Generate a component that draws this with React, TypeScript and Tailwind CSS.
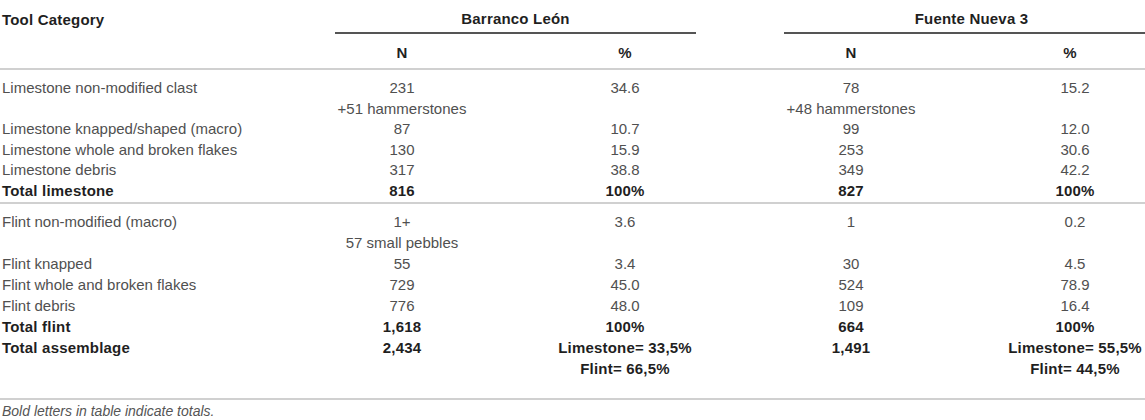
import React from "react";

type Row = {
  label: string;
  bl: string[];
  blPct: string[];
  fn: string[];
  fnPct: string[];
  bold?: boolean;
};

const limestone: Row[] = [
  { label: "Limestone non-modified clast", bl: ["231", "+51 hammerstones"], blPct: ["34.6"], fn: ["78", "+48 hammerstones"], fnPct: ["15.2"] },
  { label: "Limestone knapped/shaped (macro)", bl: ["87"], blPct: ["10.7"], fn: ["99"], fnPct: ["12.0"] },
  { label: "Limestone whole and broken flakes", bl: ["130"], blPct: ["15.9"], fn: ["253"], fnPct: ["30.6"] },
  { label: "Limestone debris", bl: ["317"], blPct: ["38.8"], fn: ["349"], fnPct: ["42.2"] },
  { label: "Total limestone", bl: ["816"], blPct: ["100%"], fn: ["827"], fnPct: ["100%"], bold: true },
];

const flint: Row[] = [
  { label: "Flint non-modified (macro)", bl: ["1+", "57 small pebbles"], blPct: ["3.6"], fn: ["1"], fnPct: ["0.2"] },
  { label: "Flint knapped", bl: ["55"], blPct: ["3.4"], fn: ["30"], fnPct: ["4.5"] },
  { label: "Flint whole and broken flakes", bl: ["729"], blPct: ["45.0"], fn: ["524"], fnPct: ["78.9"] },
  { label: "Flint debris", bl: ["776"], blPct: ["48.0"], fn: ["109"], fnPct: ["16.4"] },
  { label: "Total flint", bl: ["1,618"], blPct: ["100%"], fn: ["664"], fnPct: ["100%"], bold: true },
  { label: "Total assemblage", bl: ["2,434"], blPct: ["Limestone= 33,5%", "Flint= 66,5%"], fn: ["1,491"], fnPct: ["Limestone= 55,5%", "Flint= 44,5%"], bold: true },
];

const Lines = ({ items }: { items: string[] }) => (
  <>
    {items.map((t, i) => (
      <div key={i} className="whitespace-nowrap">
        {t}
      </div>
    ))}
  </>
);

const BodyRow = ({ row, leading }: { row: Row; leading: string }) => {
  const tone = row.bold
    ? "font-bold text-[#1f1f1f] tracking-[0.2px]"
    : "text-[#505050]";
  return (
    <tr className={`align-top ${leading} ${tone}`}>
      <td className="pl-[2px] whitespace-nowrap">{row.label}</td>
      <td className="text-center">
        <Lines items={row.bl} />
      </td>
      <td />
      <td className="text-center">
        <Lines items={row.blPct} />
      </td>
      <td />
      <td className="text-center">
        <Lines items={row.fn} />
      </td>
      <td />
      <td className="text-center">
        <Lines items={row.fnPct} />
      </td>
    </tr>
  );
};

export default function App() {
  return (
    <div
      className="w-[1145px] h-[420px] bg-white overflow-hidden text-[15px]"
      style={{ fontFamily: '"Liberation Sans", Arial, sans-serif' }}
    >
      <table className="w-[1145px] table-fixed border-collapse">
        <colgroup>
          <col className="w-[335px]" />
          <col className="w-[134px]" />
          <col className="w-[85px]" />
          <col className="w-[142px]" />
          <col className="w-[88px]" />
          <col className="w-[134px]" />
          <col className="w-[87px]" />
          <col className="w-[140px]" />
        </colgroup>
        <thead className="font-bold text-[#1f1f1f] tracking-[0.2px] leading-[20px]">
          <tr className="h-[33px] align-bottom">
            <td className="pl-[2px] pb-[3px]">Tool Category</td>
            <td colSpan={3} className="text-center border-b-2 border-[#555] pb-[3px]">
              Barranco León
            </td>
            <td />
            <td colSpan={3} className="text-center border-b-2 border-[#555] pb-[3px] pl-[14px]">
              Fuente Nueva 3
            </td>
          </tr>
          <tr className="h-[36px] align-bottom border-b-2 border-[#d0d0d0]">
            <td />
            <td className="text-center pb-[5px]">N</td>
            <td />
            <td className="text-center pb-[5px]">%</td>
            <td />
            <td className="text-center pb-[5px]">N</td>
            <td />
            <td className="text-center pb-[5px] pr-[10px]">%</td>
          </tr>
        </thead>
        <tbody>
          <tr className="h-[9px]">
            <td colSpan={8} />
          </tr>
          {limestone.map((r) => (
            <BodyRow key={r.label} row={r} leading="leading-[20.5px]" />
          ))}
          <tr className="h-[2px] border-b-2 border-[#d0d0d0]">
            <td colSpan={8} />
          </tr>
          <tr className="h-[8px]">
            <td colSpan={8} />
          </tr>
          {flint.map((r) => (
            <BodyRow key={r.label} row={r} leading="leading-[21px]" />
          ))}
          <tr className="h-[20px] border-b-2 border-[#d0d0d0]">
            <td colSpan={8} />
          </tr>
        </tbody>
      </table>
      <p className="pl-[2px] pt-[3px] text-[14px] leading-[16px] italic text-[#555]">
        Bold letters in table indicate totals.
      </p>
    </div>
  );
}
